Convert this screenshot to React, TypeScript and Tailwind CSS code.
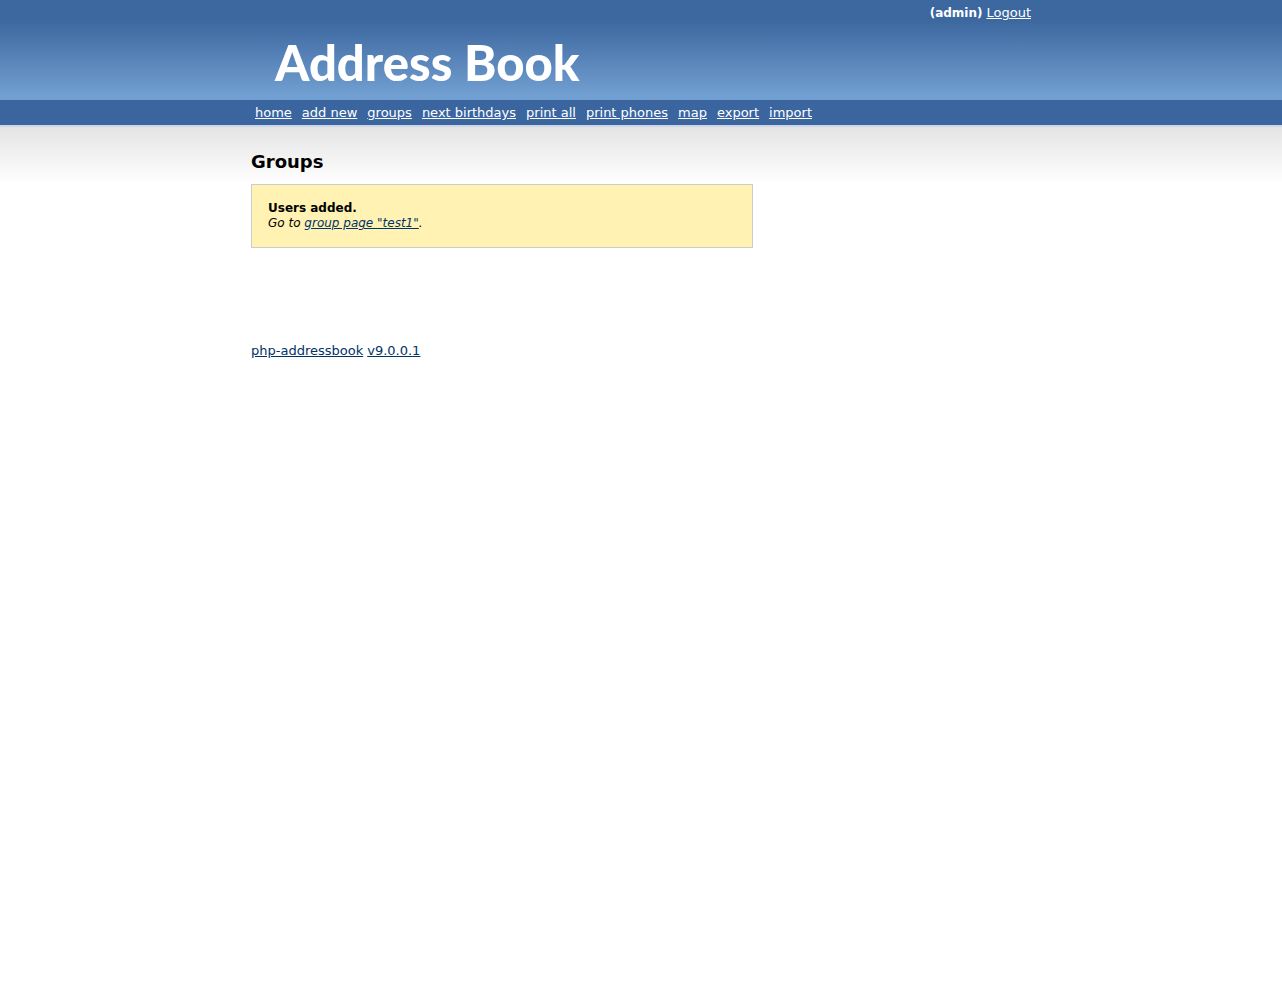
const links = ['home', 'add new', 'groups', 'next birthdays', 'print all', 'print phones', 'map', 'export', 'import'];

export default function App() {
  return (
    <div className="min-h-screen bg-white font-['Verdana','DejaVu_Sans',sans-serif] text-[13px] leading-4 text-black">
      <header className="h-[100px] bg-linear-to-b from-[#3c679f] from-20% to-[#729fd1] to-95% text-white">
        <div className="mx-auto flex h-full max-w-[780px] flex-col">
          <div className="flex items-baseline justify-end gap-1 pt-[5px]">
            <b className="text-xs leading-4">(admin)</b>
            <a href="#logout" className="underline">Logout</a>
          </div>
          <h1 className="mt-[11px] pl-6 font-['Lato',sans-serif] text-[49px] leading-[60px] font-black">
            Address Book
          </h1>
        </div>
      </header>
      <nav className="bg-[#3a659f] text-white">
        <ul className="mx-auto flex max-w-[780px] flex-wrap items-center gap-x-[10px] px-1 pt-[5px] pb-1">
          {links.map((label) => (
            <li key={label}>
              <a href={'#' + label.replace(' ', '-')} className="whitespace-nowrap underline">{label}</a>
            </li>
          ))}
        </ul>
      </nav>
      <main className="border-t-2 border-[#ccd6e6] bg-linear-to-b from-[#e4e4e4] to-white to-[57px]">
        <div className="mx-auto max-w-[780px]">
          <h2 className="pt-[23px] text-lg leading-6 font-bold">Groups</h2>
          <div className="mt-[10px] max-w-[502px] border border-[#cccccc] bg-[#fff2b3] p-4 text-xs leading-[15px]">
            <p className="font-bold">Users added.</p>
            <p className="italic">
              Go to <a href="#group" className="text-[#003366] underline">group page "test1"</a>.
            </p>
          </div>
          <footer className="mt-[95px] flex gap-1 text-[#003366]">
            <a href="#project" className="underline">php-addressbook</a>
            <a href="#version" className="underline">v9.0.0.1</a>
          </footer>
        </div>
      </main>
    </div>
  );
}
